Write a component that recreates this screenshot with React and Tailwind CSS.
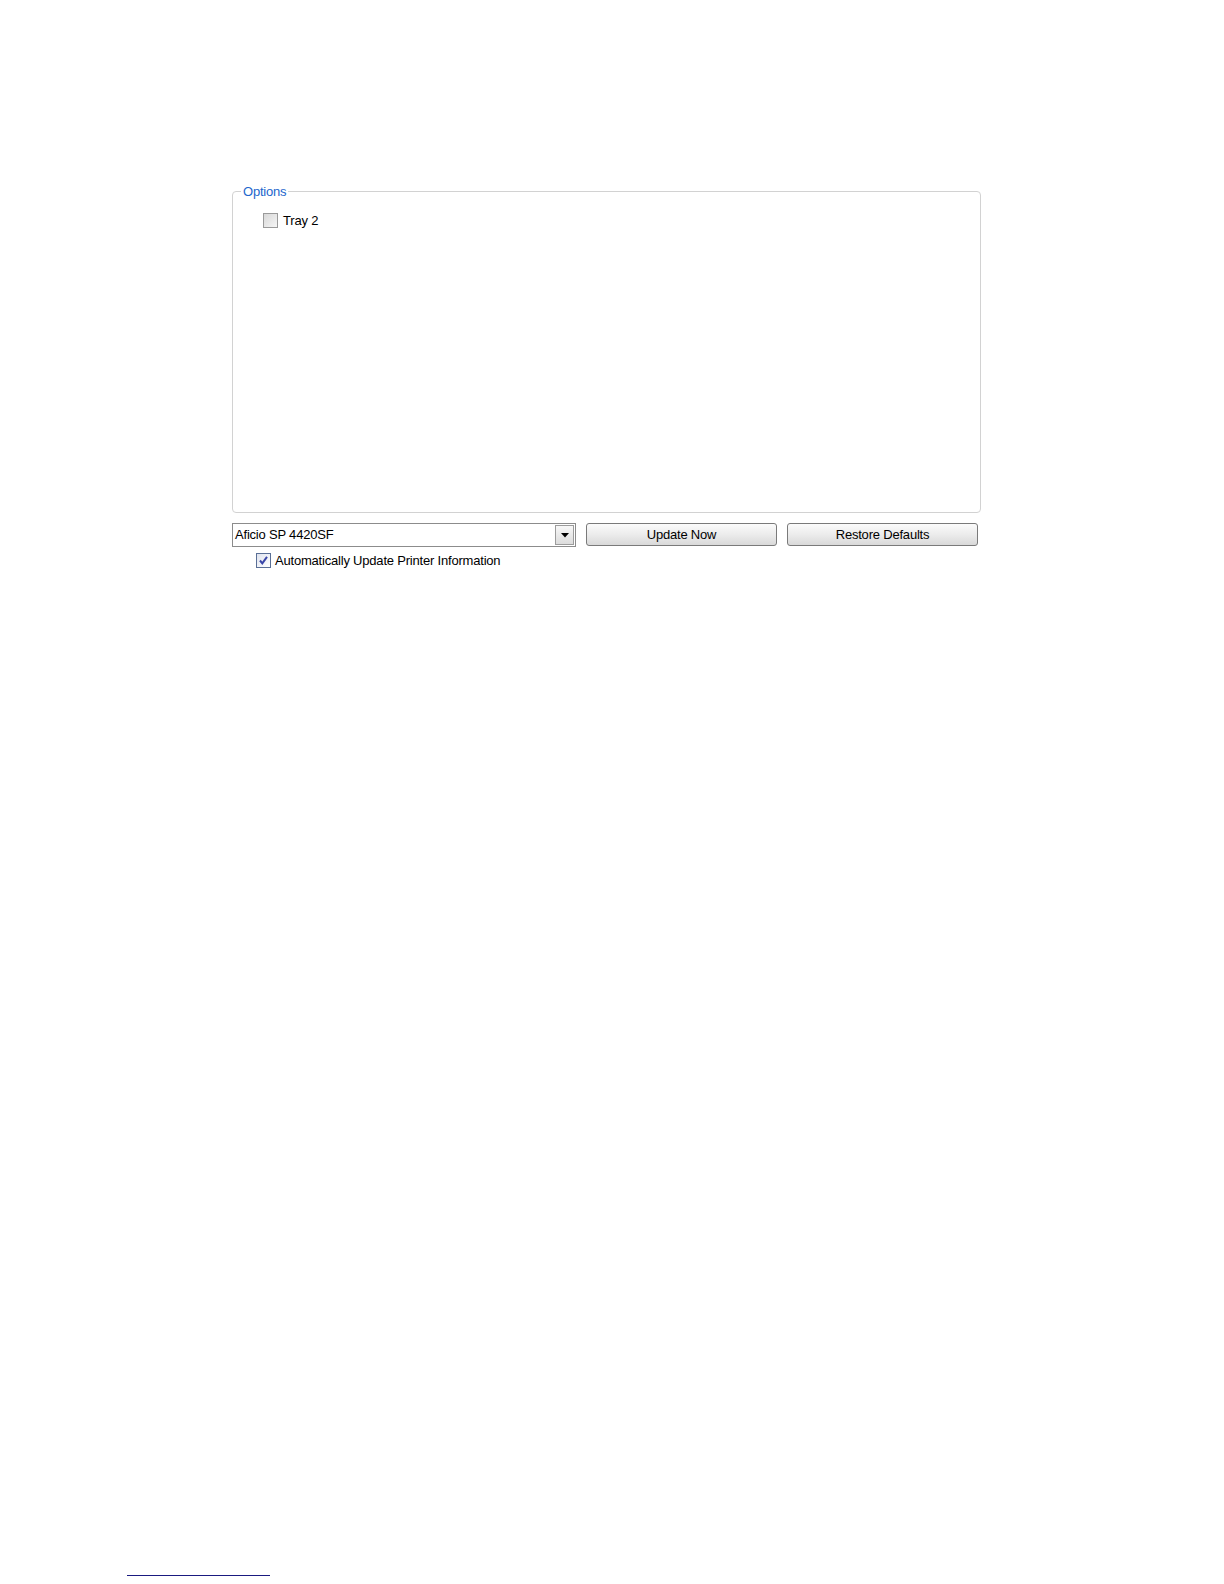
function CheckBox({ checked }) {
  return (
    <span
      className={
        "flex h-[15px] w-[15px] shrink-0 items-center justify-center border bg-gradient-to-br " +
        (checked
          ? "border-[#5a6f96] from-[#dfe3ee] to-[#ffffff]"
          : "border-[#9a9a9a] from-[#d8d8d8] to-[#f6f6f6]")
      }
    >
      {checked && (
        <svg width="11" height="11" viewBox="0 0 11 11">
          <path d="M2 5.5 L4.3 8.3 L9 1.8" fill="none" stroke="#3a46a8" strokeWidth="2" />
        </svg>
      )}
    </span>
  );
}

function Button({ children }) {
  return (
    <button className="flex h-[23px] w-[191px] items-center justify-center rounded-[3px] border border-[#7a7a7a] bg-gradient-to-b from-[#fbfbfb] via-[#ececec] to-[#d9d9d9] text-[13px] tracking-[-0.2px] text-black">
      {children}
    </button>
  );
}

export default function App() {
  return (
    <div
      className="flex h-[1584px] flex-col bg-white text-[13px] text-black"
      style={{ fontFamily: '"Liberation Sans", Arial, sans-serif' }}
    >
      <div className="ml-[232px] mt-[191px] w-[749px]">
        {/* Options group */}
        <div className="relative h-[322px] rounded-[4px] border border-[#d2d2d2] pl-[30px] pt-[21px]">
          <span className="absolute -top-[8px] left-[8px] bg-white px-[2px] leading-[16px] tracking-[-0.2px] text-[#2366cc]">
            Options
          </span>
          <label className="flex items-center gap-[5px] tracking-[-0.2px]">
            <CheckBox />
            <span className="leading-[15px]">Tray 2</span>
          </label>
        </div>

        {/* bottom controls */}
        <div className="mt-[10px] flex items-start">
          <div className="flex h-[24px] w-[344px] items-center border border-[#8c8c8c] bg-white pl-[2px] pr-[1px]">
            <span className="flex-1 tracking-[-0.2px]">Aficio SP 4420SF</span>
            <span className="flex h-[20px] w-[19px] items-center justify-center border border-[#9c9c9c] bg-gradient-to-b from-[#f8f8f8] to-[#dcdcdc]">
              <svg width="8" height="5" viewBox="0 0 8 5">
                <path d="M0 0 H8 L4 4.5 Z" fill="#000" />
              </svg>
            </span>
          </div>
          <div className="ml-[10px] flex gap-[10px]">
            <Button>Update Now</Button>
            <Button>Restore Defaults</Button>
          </div>
        </div>
        <label className="mt-[6px] flex items-center gap-[4px] pl-[24px] tracking-[-0.2px]">
          <CheckBox checked />
          <span className="leading-[15px]">Automatically Update Printer Information</span>
        </label>
      </div>

      <div className="mb-[8px] ml-[127px] mt-auto h-px w-[143px] bg-[#1a1a80]" />
    </div>
  );
}
